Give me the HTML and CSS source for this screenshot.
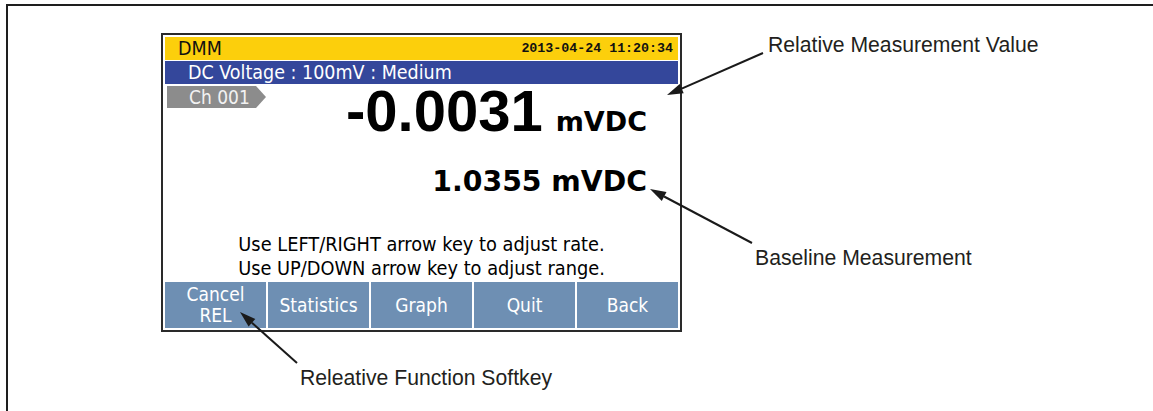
FILE: index.html
```html
<!DOCTYPE html>
<html>

<head>
  <title>DMM Relative Measurement</title>
  <link rel="stylesheet" href="styles.css">
</head>

<body>
  <div class="frame">
    <div class="row">
      <!-- meter screen -->
      <div class="screen">
        <div class="title-bar">
          <span class="title">DMM</span>
          <span class="clock">2013-04-24 11:20:34</span>
        </div>
        <div class="mode-bar">DC Voltage : 100mV : Medium</div>
        <div class="readout">
          <div class="top-line">
            <div class="channel">Ch 001</div>
            <div class="rel-value">-0.0031<span class="unit">mVDC</span></div>
          </div>
          <div class="base-value">1.0355 mVDC</div>
          <div class="hint">
            Use LEFT/RIGHT arrow key to adjust rate.<br>
            Use UP/DOWN arrow key to adjust range.
          </div>
        </div>
        <div class="softkeys">
          <div class="key">Cancel<br>REL</div>
          <div class="key">Statistics</div>
          <div class="key">Graph</div>
          <div class="key">Quit</div>
          <div class="key">Back</div>
        </div>
      </div>

      <div class="notes">
        <div class="note">Relative Measurement Value</div>
        <div class="note note-base">Baseline Measurement</div>
      </div>
    </div>
    <div class="note note-key">Releative Function Softkey</div>

    <!-- callout arrows -->
    <svg class="arrows" width="1153" height="411" viewBox="0 0 1153 411">
      <line x1="763" y1="53" x2="681.7" y2="88.6" />
      <polygon points="667,95 683.7,93.2 679.7,84.0" />
      <line x1="752" y1="243" x2="664.1" y2="196.5" />
      <polygon points="650,189 666.5,192.1 661.8,200.9" />
      <line x1="297" y1="363" x2="251.9" y2="322.7" />
      <polygon points="240,312 255.3,319.0 248.6,326.4" />
    </svg>
  </div>
</body>

</html>
```

FILE: styles.css
```css
html,
body {
  margin: 0;
  overflow: hidden;
  background: #fff;
}

body {
  font-family: "Liberation Sans", Arial, sans-serif;
  color: #231f20;
}

.frame {
  position: relative;
  box-sizing: border-box;
  margin: 4px 0 0 6px;
  border-top: 2px solid #1e1e1e;
  border-left: 2px solid #1e1e1e;
  height: 407px;
  padding: 27px 0 0 153px;
}

.row {
  display: flex;
  align-items: flex-start;
}

/* meter screen */
.screen {
  width: 521px;
  box-sizing: border-box;
  border: 2px solid #2a2a2a;
  padding: 2px;
  background: #fff;
  font-family: "DejaVu Sans Condensed", "DejaVu Sans", sans-serif;
  font-stretch: condensed;
  font-size: 19px;
}

.title-bar {
  height: 23px;
  background: #fccf0c;
  display: flex;
  align-items: center;
  justify-content: space-between;
  padding: 0 5px 0 13px;
  color: #111;
}

.title {
  font-size: 19.5px;
}

.clock {
  font-family: "Liberation Mono", "Courier New", monospace;
  font-weight: bold;
  font-size: 13.3px;
  font-stretch: normal;
}

.mode-bar {
  height: 23px;
  line-height: 23px;
  margin-top: 1px;
  background: #34479b;
  color: #fff;
  padding-left: 23px;
  font-size: 19.5px;
}

.readout {
  height: 198px;
  display: flex;
  flex-direction: column;
}

.top-line {
  display: flex;
  align-items: flex-start;
}

.channel {
  margin: 2px 0 0 2px;
  width: 99px;
  height: 22px;
  line-height: 22px;
  box-sizing: border-box;
  padding-left: 22px;
  background: #8c8c8c;
  color: #f2f2f2;
  clip-path: polygon(0 0, 89px 0, 99px 50%, 89px 100%, 0 100%);
}

.rel-value {
  margin: 2px 0 0 auto;
  padding-right: 31px;
  font-family: "Liberation Sans", Arial, sans-serif;
  font-weight: bold;
  font-size: 58px;
  line-height: 50px;
  color: #000;
}

.unit {
  font-family: "DejaVu Sans", sans-serif;
  font-stretch: normal;
  font-size: 27px;
  line-height: 1;
  margin-left: 13px;
}

.base-value {
  margin-top: 30px;
  align-self: flex-end;
  padding-right: 31px;
  font-family: "DejaVu Sans", sans-serif;
  font-stretch: normal;
  font-weight: bold;
  font-size: 28.3px;
  line-height: 32px;
  color: #000;
}

.hint {
  margin-top: auto;
  margin-bottom: 1px;
  text-align: center;
  line-height: 24px;
  font-size: 19.8px;
  color: #000;
}

.softkeys {
  display: flex;
  gap: 2px;
  height: 46px;
}

.key {
  flex: 1;
  background: #6e8fb3;
  color: #fff;
  display: flex;
  align-items: center;
  justify-content: center;
  text-align: center;
  line-height: 21px;
}

/* callout labels */
.notes {
  display: flex;
  flex-direction: column;
  margin-left: 86px;
}

.note {
  font-size: 21.2px;
  line-height: 24px;
  white-space: nowrap;
}

.note-base {
  margin: 189px 0 0 -13px;
}

.note-key {
  margin: 34px 0 0 139px;
}

.arrows {
  position: absolute;
  top: -6px;
  left: -8px;
}

.arrows line {
  stroke: #1a1a1a;
  stroke-width: 2;
}

.arrows polygon {
  fill: #1a1a1a;
}
```
